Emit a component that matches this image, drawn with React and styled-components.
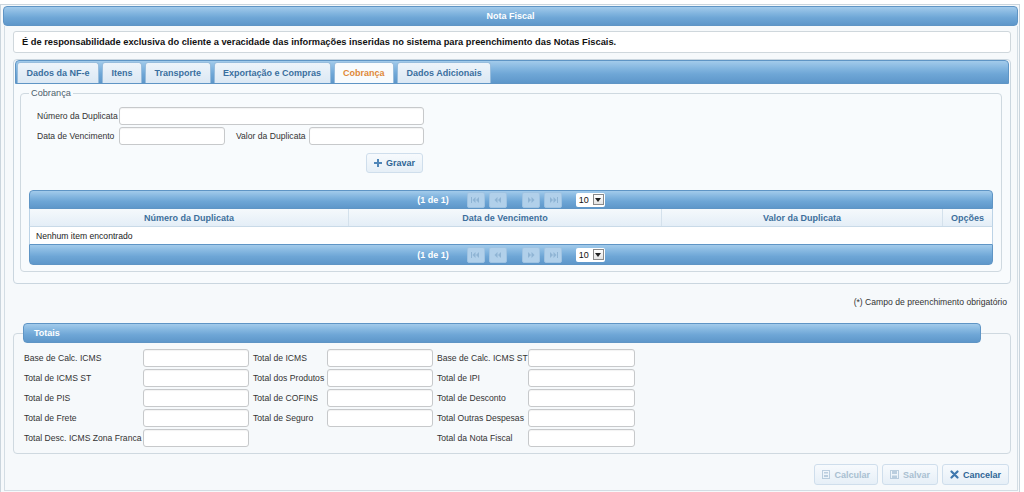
import React from 'react';
import styled, { createGlobalStyle, css } from 'styled-components';

const GlobalStyle = createGlobalStyle`
  html, body { margin: 0; padding: 0; background: #ffffff; }
  body {
    font-family: "Liberation Sans", Arial, sans-serif;
    font-size: 8.6px;
    color: #222;
  }
  * { box-sizing: border-box; }
`;

const blueBar = css`
  background: linear-gradient(to bottom, #a3cbeb 0%, #82b5df 35%, #6ea6d6 60%, #5e97ca 100%);
  border: 1px solid #5f95c5;
`;

const Dialog = styled.div`
  margin-top: 4px;
  width: 1020px;
  height: 492px;
  border: 1px solid #cad5dd;
  border-bottom: none;
  padding: 1px 1px 0 2px;
  background: #f6f9fb;
`;

const TitleBar = styled.div`
  ${blueBar};
  height: 20px;
  border-radius: 4px;
  color: #fff;
  font-weight: bold;
  font-size: 9px;
  display: flex;
  align-items: center;
  justify-content: center;
`;

const Body = styled.div`
  margin-left: 1px;
  border: 1px solid #d3dde4;
  border-top: none;
  padding: 5px 6px 5px 8px;
  display: flex;
  flex-direction: column;
  align-items: flex-start;
`;

const InfoBox = styled.div`
  width: 998px;
  height: 22px;
  background: #fff;
  border: 1px solid #cfd7dc;
  border-radius: 3px;
  display: flex;
  align-items: center;
  padding-left: 8px;
  font-weight: bold;
  font-size: 9.3px;
  color: #111;
`;

const TabPanel = styled.div`
  width: 998px;
  margin-top: 6px;
  height: 225px;
  border: 1px solid #cad6df;
  border-radius: 4px;
  padding: 0 1px;
  background: #f8fbfd;
`;

const TabBar = styled.div`
  ${blueBar};
  height: 24px;
  border-radius: 4px 4px 0 0;
  padding: 2px 0 0 1px;
  display: flex;
  align-items: flex-end;
  gap: 3px;
`;

const Tab = styled.div`
  height: 21px;
  padding: 0 8.5px;
  display: flex;
  align-items: center;
  font-weight: bold;
  font-size: 9px;
  border: 1px solid #98bddd;
  border-bottom: none;
  border-radius: 3px 3px 0 0;
  color: ${(p) => (p.active ? '#e08838' : '#3a6f9f')};
  background: ${(p) =>
    p.active ? '#f8fbfd' : 'linear-gradient(to bottom, #eef4fa 0%, #dbe8f4 100%)'};
`;

const TabContent = styled.div`
  padding: 4px 7px 10px 5px;
`;

const Fieldset = styled.fieldset`
  margin: 0;
  min-inline-size: 0;
  border: 1px solid #cfd9e0;
  border-radius: 4px;
  padding: 0 8px 6px 8px;
`;

const Legend = styled.legend`
  padding: 0 2px;
  font-size: 9.2px;
  color: #4d5e6c;
  line-height: 11px;
`;

const FormGrid = styled.div`
  margin: 8px 0 0 8px;
  display: grid;
  grid-template-columns: 82px 117px 73px 115px;
  row-gap: 2px;
  align-items: center;
`;

const Label = styled.label`
  color: #333;
  white-space: nowrap;
`;

const Input = styled.input`
  height: 18px;
  width: ${(p) => p.w || 106}px;
  border: 1px solid #c7c9cb;
  border-radius: 3px;
  background: #fff;
  box-shadow: inset 0 1px 1px rgba(0, 0, 0, 0.05);
  padding: 0 3px;
  font: inherit;
  outline: none;
  grid-column: ${(p) => p.span || 'auto'};
`;

const ButtonCell = styled.div`
  grid-column: 1 / 5;
  display: flex;
  justify-content: flex-end;
  padding-right: 1px;
  margin-top: 6px;
`;

const Button = styled.button`
  height: ${(p) => p.h || 21}px;
  padding: 0 7px;
  display: flex;
  align-items: center;
  gap: 4px;
  font-family: inherit;
  font-weight: bold;
  font-size: 9px;
  border: 1px solid #cfdeec;
  border-radius: 3px;
  background: linear-gradient(to bottom, #f7fafd 0%, #e6eff7 100%);
  color: ${(p) => (p.disabled ? '#a9bfd1' : '#2f6596')};
  cursor: default;
  svg { opacity: ${(p) => (p.disabled ? 0.35 : 1)}; }
`;

const DataTable = styled.div`
  margin-top: 17px;
`;

const Pager = styled.div`
  ${blueBar};
  height: ${(p) => p.h}px;
  border-radius: ${(p) => (p.top ? '4px 4px 0 0' : '0 0 4px 4px')};
  display: flex;
  align-items: center;
  justify-content: center;
  color: #fff;
  font-weight: bold;
  font-size: 9px;
`;

const PageInfo = styled.span`
  margin-right: 18px;
`;

const PageBtn = styled.span`
  width: 18px;
  height: 16px;
  margin-right: ${(p) => p.mr || 4}px;
  border: 1px solid #9fc3e2;
  border-radius: 2px;
  background: #b1d0ea;
  display: flex;
  align-items: center;
  justify-content: center;
`;

const RowsSelect = styled.span`
  margin-left: 8px;
  height: 14px;
  width: 29px;
  background: #fff;
  border-radius: 2px;
  color: #111;
  font-weight: normal;
  display: flex;
  align-items: center;
  justify-content: space-between;
  padding: 0 1px 0 3px;
`;

const SelectArrow = styled.span`
  width: 11px;
  height: 11px;
  border: 1px solid #8a8a8a;
  background: linear-gradient(#fff, #e4e4e4);
  display: flex;
  align-items: center;
  justify-content: center;
`;

const HeadRow = styled.div`
  display: grid;
  grid-template-columns: 318px 313px 281px 1fr;
  height: 18px;
  background: linear-gradient(to bottom, #f5f9fc 0%, #e4eef7 100%);
  border-left: 1px solid #bcd3e6;
  border-right: 1px solid #bcd3e6;
  border-bottom: 1px solid #c9dae8;
`;

const HeadCell = styled.div`
  display: flex;
  align-items: center;
  justify-content: center;
  font-weight: bold;
  font-size: 9px;
  color: #3d6f9c;
  border-left: ${(p) => (p.first ? 'none' : '1px solid #d4e1ec')};
`;

const EmptyRow = styled.div`
  height: 17px;
  background: #fff;
  border-left: 1px solid #bcd3e6;
  border-right: 1px solid #bcd3e6;
  display: flex;
  align-items: center;
  padding-left: 6px;
  color: #222;
`;

const Note = styled.div`
  align-self: stretch;
  margin-top: 13px;
  text-align: right;
  padding-right: 4px;
  line-height: 10px;
  color: #333;
`;

const TotalsSet = styled.fieldset`
  margin: 16px 0 0 0;
  min-inline-size: 0;
  width: 998px;
  max-width: 998px;
  border: 1px solid #cfd9e0;
  border-radius: 4px;
  padding: 0 0 6px 9px;
`;

const BarLegend = styled.legend`
  ${blueBar};
  width: 958px;
  height: 20px;
  border-radius: 4px;
  padding: 0 10px;
  color: #fff;
  font-weight: bold;
  font-size: 9px;
  line-height: 18px;
`;

const TotalsGrid = styled.div`
  margin: 6px 0 0 1px;
  display: grid;
  grid-template-columns: 119px 110px 74px 110px 91px 107px;
  row-gap: 2px;
  align-items: center;
`;

const Actions = styled.div`
  align-self: stretch;
  margin-top: 10px;
  display: flex;
  justify-content: flex-end;
  gap: 4px;
  padding-right: 2px;
`;

const Arrow = ({ dir = 'l', double, bar }) => (
  <svg width="10" height="6" viewBox="0 0 10 6" fill="#8fb4d4">
    {dir === 'l' ? (
      <>
        {bar && <rect x="0" y="0" width="1" height="6" />}
        <path d="M1.5 3 L4.5 0 V6 Z" />
        {double && <path d="M5 3 L8 0 V6 Z" />}
      </>
    ) : (
      <>
        <path d="M2 0 L5 3 L2 6 Z" />
        {double && <path d="M5.5 0 L8.5 3 L5.5 6 Z" />}
        {bar && <rect x="9" y="0" width="1" height="6" />}
      </>
    )}
  </svg>
);

const PagerBar = ({ top }) => (
  <Pager top={top} h={top ? 19 : 21}>
    <PageInfo>(1 de 1)</PageInfo>
    <PageBtn><Arrow dir="l" bar double /></PageBtn>
    <PageBtn mr={15}><Arrow dir="l" double /></PageBtn>
    <PageBtn><Arrow dir="r" double /></PageBtn>
    <PageBtn mr={6}><Arrow dir="r" bar double /></PageBtn>
    <RowsSelect>
      10
      <SelectArrow>
        <svg width="6" height="4" viewBox="0 0 6 4"><path d="M0 0 H6 L3 4 Z" fill="#222" /></svg>
      </SelectArrow>
    </RowsSelect>
  </Pager>
);

const PlusIcon = () => (
  <svg width="8" height="8" viewBox="0 0 8 8">
    <path d="M3 0 H5 V3 H8 V5 H5 V8 H3 V5 H0 V3 H3 Z" fill="#4f86b8" />
  </svg>
);

const CalcIcon = () => (
  <svg width="8" height="9" viewBox="0 0 8 9">
    <rect x="0.5" y="0.5" width="7" height="8" fill="none" stroke="#5b87ad" />
    <rect x="2" y="2" width="4" height="1.5" fill="#5b87ad" />
    <rect x="2" y="5" width="4" height="2" fill="#5b87ad" />
  </svg>
);

const SaveIcon = () => (
  <svg width="9" height="9" viewBox="0 0 9 9">
    <rect x="0.5" y="0.5" width="8" height="8" fill="none" stroke="#5b87ad" />
    <rect x="2" y="1" width="5" height="3" fill="#5b87ad" />
    <rect x="2" y="5.5" width="5" height="2.5" fill="#5b87ad" />
  </svg>
);

const CloseIcon = () => (
  <svg width="9" height="9" viewBox="0 0 9 9">
    <path d="M1.5 1.5 L7.5 7.5 M7.5 1.5 L1.5 7.5" stroke="#3e77ad" strokeWidth="2.2" strokeLinecap="round" />
  </svg>
);

const tabs = ['Dados da NF-e', 'Itens', 'Transporte', 'Exportação e Compras', 'Cobrança', 'Dados Adicionais'];

const totals = [
  ['Base de Calc. ICMS', 'Total de ICMS', 'Base de Calc. ICMS ST'],
  ['Total de ICMS ST', 'Total dos Produtos', 'Total de IPI'],
  ['Total de PIS', 'Total de COFINS', 'Total de Desconto'],
  ['Total de Frete', 'Total de Seguro', 'Total Outras Despesas'],
  ['Total Desc. ICMS Zona Franca', null, 'Total da Nota Fiscal'],
];

const App = () => {
  return (
    <>
      <GlobalStyle />
      <Dialog>
        <TitleBar>Nota Fiscal</TitleBar>
        <Body>
          <InfoBox>
            É de responsabilidade exclusiva do cliente a veracidade das informações inseridas no sistema para preenchimento das Notas Fiscais.
          </InfoBox>

          <TabPanel>
            <TabBar>
              {tabs.map((t) => (
                <Tab key={t} active={t === 'Cobrança'}>{t}</Tab>
              ))}
            </TabBar>
            <TabContent>
              <Fieldset>
                <Legend>Cobrança</Legend>
                <FormGrid>
                  <Label>Número da Duplicata</Label>
                  <Input w={305} span="2 / 5" />
                  <Label>Data de Vencimento</Label>
                  <Input w={106} />
                  <Label>Valor da Duplicata</Label>
                  <Input w={115} />
                  <ButtonCell>
                    <Button h={20}><PlusIcon />Gravar</Button>
                  </ButtonCell>
                </FormGrid>
                <DataTable>
                  <PagerBar top />
                  <HeadRow>
                    <HeadCell first>Número da Duplicata</HeadCell>
                    <HeadCell>Data de Vencimento</HeadCell>
                    <HeadCell>Valor da Duplicata</HeadCell>
                    <HeadCell>Opções</HeadCell>
                  </HeadRow>
                  <EmptyRow>Nenhum item encontrado</EmptyRow>
                  <PagerBar />
                </DataTable>
              </Fieldset>
            </TabContent>
          </TabPanel>

          <Note>(*) Campo de preenchimento obrigatório</Note>

          <TotalsSet>
            <BarLegend>Totais</BarLegend>
            <TotalsGrid>
              {totals.map((row, i) =>
                row.map((label, j) =>
                  label ? (
                    <React.Fragment key={`${i}-${j}`}>
                      <Label>{label}</Label>
                      <Input w={j === 2 ? 107 : 106} />
                    </React.Fragment>
                  ) : (
                    <React.Fragment key={`${i}-${j}`}>
                      <span />
                      <span />
                    </React.Fragment>
                  )
                )
              )}
            </TotalsGrid>
          </TotalsSet>

          <Actions>
            <Button disabled><CalcIcon />Calcular</Button>
            <Button disabled><SaveIcon />Salvar</Button>
            <Button><CloseIcon />Cancelar</Button>
          </Actions>
        </Body>
      </Dialog>
    </>
  );
};

export default App;
